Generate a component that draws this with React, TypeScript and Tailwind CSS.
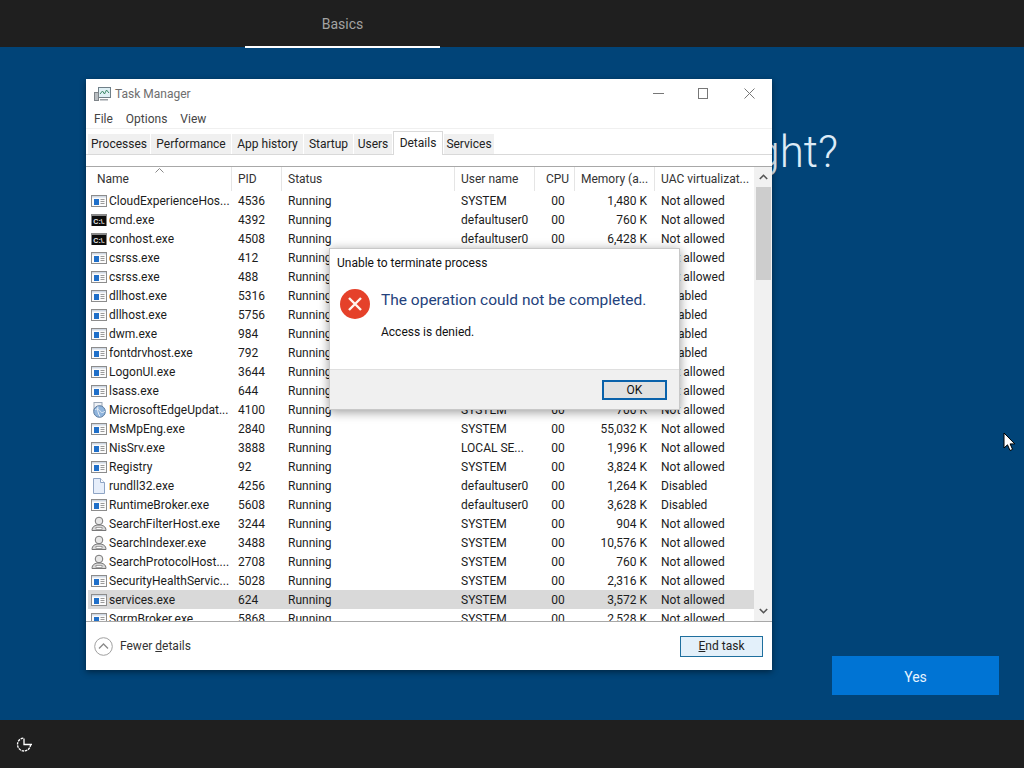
import React from 'react';

type IconKind = 'app' | 'cmd' | 'file' | 'user' | 'edge';

interface Proc {
  name: string;
  pid: string;
  user: string;
  mem: string;
  uac: string;
  icon: IconKind;
}

const procs: Proc[] = [
  { name: 'CloudExperienceHos...', pid: '4536', user: 'SYSTEM', mem: '1,480 K', uac: 'Not allowed', icon: 'app' },
  { name: 'cmd.exe', pid: '4392', user: 'defaultuser0', mem: '760 K', uac: 'Not allowed', icon: 'cmd' },
  { name: 'conhost.exe', pid: '4508', user: 'defaultuser0', mem: '6,428 K', uac: 'Not allowed', icon: 'cmd' },
  { name: 'csrss.exe', pid: '412', user: 'SYSTEM', mem: '1,012 K', uac: 'Not allowed', icon: 'app' },
  { name: 'csrss.exe', pid: '488', user: 'SYSTEM', mem: '1,104 K', uac: 'Not allowed', icon: 'app' },
  { name: 'dllhost.exe', pid: '5316', user: 'defaultuser0', mem: '2,120 K', uac: 'Disabled', icon: 'app' },
  { name: 'dllhost.exe', pid: '5756', user: 'defaultuser0', mem: '1,860 K', uac: 'Disabled', icon: 'app' },
  { name: 'dwm.exe', pid: '984', user: 'DWM-1', mem: '22,340 K', uac: 'Disabled', icon: 'app' },
  { name: 'fontdrvhost.exe', pid: '792', user: 'UMFD-1', mem: '1,340 K', uac: 'Disabled', icon: 'app' },
  { name: 'LogonUI.exe', pid: '3644', user: 'SYSTEM', mem: '9,212 K', uac: 'Not allowed', icon: 'app' },
  { name: 'lsass.exe', pid: '644', user: 'SYSTEM', mem: '4,508 K', uac: 'Not allowed', icon: 'app' },
  { name: 'MicrosoftEdgeUpdat...', pid: '4100', user: 'SYSTEM', mem: '700 K', uac: 'Not allowed', icon: 'edge' },
  { name: 'MsMpEng.exe', pid: '2840', user: 'SYSTEM', mem: '55,032 K', uac: 'Not allowed', icon: 'app' },
  { name: 'NisSrv.exe', pid: '3888', user: 'LOCAL SE...', mem: '1,996 K', uac: 'Not allowed', icon: 'app' },
  { name: 'Registry', pid: '92', user: 'SYSTEM', mem: '3,824 K', uac: 'Not allowed', icon: 'app' },
  { name: 'rundll32.exe', pid: '4256', user: 'defaultuser0', mem: '1,264 K', uac: 'Disabled', icon: 'file' },
  { name: 'RuntimeBroker.exe', pid: '5608', user: 'defaultuser0', mem: '3,628 K', uac: 'Disabled', icon: 'app' },
  { name: 'SearchFilterHost.exe', pid: '3244', user: 'SYSTEM', mem: '904 K', uac: 'Not allowed', icon: 'user' },
  { name: 'SearchIndexer.exe', pid: '3488', user: 'SYSTEM', mem: '10,576 K', uac: 'Not allowed', icon: 'user' },
  { name: 'SearchProtocolHost....', pid: '2708', user: 'SYSTEM', mem: '760 K', uac: 'Not allowed', icon: 'user' },
  { name: 'SecurityHealthServic...', pid: '5028', user: 'SYSTEM', mem: '2,316 K', uac: 'Not allowed', icon: 'app' },
  { name: 'services.exe', pid: '624', user: 'SYSTEM', mem: '3,572 K', uac: 'Not allowed', icon: 'app' },
  { name: 'SgrmBroker.exe', pid: '5868', user: 'SYSTEM', mem: '2,528 K', uac: 'Not allowed', icon: 'app' },
];

const tabs = [
  { label: 'Processes', w: 'w-[62px]' },
  { label: 'Performance', w: 'w-[80px]' },
  { label: 'App history', w: 'w-[71px]' },
  { label: 'Startup', w: 'w-[49px]' },
  { label: 'Users', w: 'w-[38px]' },
];

function ProcIcon({ kind }: { kind: IconKind }) {
  if (kind === 'cmd') {
    return (
      <svg width="16" height="16" viewBox="0 0 16 16" className="shrink-0">
        <rect x="0.500" y="2" width="15" height="12" fill="#0c0c0c" />
        <rect x="0.500" y="2" width="15" height="2" fill="#8a8a8a" />
        <text x="8" y="12" textAnchor="middle" fontSize="7" fontWeight="700" fill="#e8e8e8" fontFamily="Liberation Sans, sans-serif">
          C:\.
        </text>
      </svg>
    );
  }
  if (kind === 'file') {
    return (
      <svg width="16" height="16" viewBox="0 0 16 16" className="shrink-0">
        <path d="M2.500 0.500h7l4 4v11h-11z" fill="#e6eefa" stroke="#8ea4c4" />
        <path d="M9.500 0.500v4h4" fill="#fff" stroke="#8ea4c4" />
      </svg>
    );
  }
  if (kind === 'user') {
    return (
      <svg width="16" height="16" viewBox="0 0 16 16" className="shrink-0">
        <circle cx="8" cy="5" r="3.800" fill="#e8e8e8" stroke="#777" />
        <path d="M1 14.500c0-4 3-5.500 7-5.500s7 1.500 7 5.500z" fill="#d8d8d8" stroke="#777" />
        <rect x="5" y="11.500" width="6" height="2" fill="#fff" stroke="#888" strokeWidth="0.700" />
      </svg>
    );
  }
  if (kind === 'edge') {
    return (
      <svg width="16" height="16" viewBox="0 0 16 16" className="shrink-0">
        <rect x="3" y="0.500" width="8" height="8" fill="#eef1f5" stroke="#9aa6b5" />
        <circle cx="8.500" cy="9.500" r="5.800" fill="#8fb4dc" stroke="#56779c" />
        <path d="M4 8c2-2 4-1 5 1s3 2 5 0M7 4.500c-1 3 0 7 2 10" stroke="#e8f0f8" fill="none" />
      </svg>
    );
  }
  return (
    <svg width="16" height="14" viewBox="0 0 16 14" className="shrink-0">
      <rect x="0.500" y="1.500" width="15" height="11" fill="#fbfbfb" stroke="#8c8c8c" />
      <rect x="1" y="2" width="14" height="1.500" fill="#cfd8e3" />
      <rect x="3" y="5" width="5" height="6" fill="#1f6fc9" />
      <path d="M9.500 5.500h4M9.500 7.500h4M9.500 9.500h4" stroke="#9a9a9a" />
    </svg>
  );
}

function ProcRow({ proc, selected }: { proc: Proc; selected: boolean }) {
  return (
    <div
      className={`grid grid-cols-[144px_50px_173px_80px_40px_80px_99px] h-[19px] items-center shrink-0 text-[12px] text-[#1c1c1c] ${
        selected ? 'bg-[#d9d9d9]' : ''
      }`}
    >
      <div className="flex items-center gap-[2px] pl-[3px] whitespace-nowrap overflow-hidden">
        <ProcIcon kind={proc.icon} />
        <span>{proc.name}</span>
      </div>
      <div className="pl-[6px]">{proc.pid}</div>
      <div className="pl-[6px]">Running</div>
      <div className="pl-[6px] whitespace-nowrap">{proc.user}</div>
      <div className="text-center pl-[6px]">00</div>
      <div className="text-right pr-[8px] whitespace-nowrap">{proc.mem}</div>
      <div className="pl-[6px] whitespace-nowrap">{proc.uac}</div>
    </div>
  );
}

function HeaderCell({ children, className = '' }: { children: React.ReactNode; className?: string }) {
  return <div className={`h-full flex items-center border-r border-[#e5e5e5] whitespace-nowrap ${className}`}>{children}</div>;
}

function TaskManager() {
  return (
    <div className="absolute left-[86px] top-[32px] w-[686px] h-[591px] bg-white flex flex-col shadow-[0_2px_6px_rgba(0,0,0,0.45)]">
      <div className="h-[29px] flex items-center pl-[8px] shrink-0">
        <svg width="17" height="16" viewBox="0 0 17 16" className="shrink-0">
          <rect x="4.500" y="1.500" width="12" height="10" fill="#dff0f5" stroke="#6f7f88" />
          <path d="M6 8l2.500-3 2 3 2-4 2.500 3" stroke="#3d8a6a" fill="none" />
          <rect x="0.500" y="6.500" width="4" height="8" fill="#b9bec2" stroke="#7e8489" />
          <rect x="6" y="13" width="8" height="1.500" fill="#9aa0a5" />
        </svg>
        <span className="ml-[4px] pt-[1px] text-[12px] text-[#6e6e6e]">Task Manager</span>
        <div className="ml-auto flex items-center pr-[17px] text-[#777]">
          <svg width="11" height="11" viewBox="0 0 11 11">
            <path d="M0 5.500h11" stroke="#777" />
          </svg>
          <svg width="10" height="11" viewBox="0 0 10 11" className="ml-[34px]">
            <rect x="0.500" y="0.500" width="9" height="10" fill="none" stroke="#777" />
          </svg>
          <svg width="11" height="11" viewBox="0 0 11 11" className="ml-[36px]">
            <path d="M0.500 0.500l10 10M10.500 0.500l-10 10" stroke="#777" />
          </svg>
        </div>
      </div>
      <div className="h-[21px] flex items-center gap-[13px] pl-[8px] pt-[1px] text-[12px] text-[#444] border-b border-[#f0f0f0] shrink-0">
        <span>File</span>
        <span>Options</span>
        <span>View</span>
      </div>
      <div className="h-[26px] flex items-end pl-[2px] gap-[1px] border-b border-[#d9d9d9] shrink-0">
        {tabs.map((t) => (
          <div
            key={t.label}
            className={`${t.w} h-[20px] bg-[#f0f0f0] flex items-center justify-center text-[12px] text-[#222] whitespace-nowrap`}
          >
            {t.label}
          </div>
        ))}
        <div className="w-[50px] h-[24px] mb-[-1px] bg-white border-x border-t border-[#d9d9d9] flex items-start pt-[2px] justify-center text-[12px] text-[#222]">
          Details
        </div>
        <div className="w-[50px] h-[20px] bg-[#f0f0f0] flex items-center justify-center text-[12px] text-[#222]">
          Services
        </div>
      </div>
      <div className="h-[12px] shrink-0 border-b border-[#a8a8a8]" />
      <div className="flex-1 min-h-0 flex border-b border-[#a8a8a8] overflow-hidden">
        <div className="flex-1 min-w-0 flex flex-col pl-[2px] overflow-hidden">
          <div className="relative grid grid-cols-[144px_50px_173px_80px_40px_80px_99px] h-[24px] shrink-0 text-[12px] text-[#333]">
            <span className="absolute left-[67px] top-[1px] text-[#777] leading-none">
              <svg width="9" height="5" viewBox="0 0 9 5">
                <path d="M0.500 4.500l4-4 4 4" fill="none" stroke="#888" />
              </svg>
            </span>
            <HeaderCell className="pl-[9px]">Name</HeaderCell>
            <HeaderCell className="pl-[6px]">PID</HeaderCell>
            <HeaderCell className="pl-[6px]">Status</HeaderCell>
            <HeaderCell className="pl-[6px]">User name</HeaderCell>
            <HeaderCell className="justify-center pl-[6px]">CPU</HeaderCell>
            <HeaderCell className="pl-[6px]">Memory (a...</HeaderCell>
            <div className="h-full flex items-center pl-[6px] whitespace-nowrap">UAC virtualizat...</div>
          </div>
          {procs.map((p, i) => (
            <ProcRow key={i} proc={p} selected={p.name === 'services.exe'} />
          ))}
        </div>
        <div className="w-[18px] shrink-0 bg-[#f1f1f1] flex flex-col items-center relative">
          <div className="h-[20px] flex items-center justify-center shrink-0">
            <svg width="9" height="6" viewBox="0 0 9 6">
              <path d="M0.800 5l3.700-3.700L8.200 5" fill="none" stroke="#555" strokeWidth="1.600" />
            </svg>
          </div>
          <div className="w-[15px] h-[93px] bg-[#cdcdcd]" />
          <div className="mt-auto h-[20px] flex items-center justify-center shrink-0">
            <svg width="9" height="6" viewBox="0 0 9 6">
              <path d="M0.800 1l3.700 3.700L8.200 1" fill="none" stroke="#555" strokeWidth="1.600" />
            </svg>
          </div>
        </div>
      </div>
      <div className="h-[48px] shrink-0 flex items-center pl-[8px] pr-[9px] text-[12px] text-[#333]">
        <svg width="19" height="19" viewBox="0 0 19 19" className="shrink-0">
          <circle cx="9.500" cy="9.500" r="8.800" fill="#fff" stroke="#a0a0a0" />
          <path d="M5 11.500l4.500-4.500 4.500 4.500" fill="none" stroke="#8a8a8a" strokeWidth="1.300" />
        </svg>
        <span className="ml-[7px]">
          Fewer <span className="underline">d</span>etails
        </span>
        <button className="ml-auto w-[83px] h-[21px] bg-[#e3f0fa] border border-[#1f6f9e] text-[12px] text-[#222]">
          <span className="underline">E</span>nd task
        </button>
      </div>
    </div>
  );
}

function ErrorDialog() {
  return (
    <div className="absolute left-[329px] top-[201px] w-[351px] h-[162px] bg-white flex flex-col shadow-[0_2px_10px_rgba(0,0,0,0.4)] border border-[#c8c8c8]">
      <div className="flex-1 min-h-0 flex flex-col pl-[7px]">
        <div className="pt-[5px] h-[28px] text-[12px] text-[#111]">Unable to terminate process</div>
        <div className="flex mt-[9px]">
          <svg width="32" height="32" viewBox="0 0 32 32" className="shrink-0 ml-[2px] mt-[2px]">
            <circle cx="16" cy="16" r="15" fill="#e5412a" />
            <path d="M10 10l12 12M22 10L10 22" stroke="#fff5ee" strokeWidth="2.400" />
          </svg>
          <div className="ml-[10px] pt-[3px]">
            <div className="text-[15.5px] leading-[22px] text-[#24427c] whitespace-nowrap">The operation could not be completed.</div>
            <div className="mt-[12px] text-[12px] text-[#111]">Access is denied.</div>
          </div>
        </div>
      </div>
      <div className="h-[40px] shrink-0 bg-[#f0f0f0] border-t border-[#dfdfdf] flex items-center justify-end pr-[12px]">
        <button className="w-[65px] h-[20px] bg-[#e1e1e1] border-2 border-[#0a62ab] text-[12px] text-[#111] leading-none">OK</button>
      </div>
    </div>
  );
}

export default function App() {
  return (
    <div className="w-[1024px] h-[768px] flex flex-col overflow-hidden bg-[#014478] font-['Roboto','Liberation_Sans',sans-serif]">
      <div className="h-[47px] shrink-0 bg-[#1f1f1f] relative z-10">
        <div className="ml-[245px] w-[195px] h-[48px] pt-[3px] border-b-2 border-white flex items-center justify-center text-[14px] text-[#a3a3a3]">
          Basics
        </div>
      </div>
      <main className="flex-1 min-h-0 relative">
        <div className="absolute right-[186px] top-[75px] text-[44px] leading-[60px] font-light text-[#dcebf7] whitespace-nowrap">
          Is this right?
        </div>
        <TaskManager />
        <ErrorDialog />
        <button className="absolute left-[832px] top-[609px] w-[167px] h-[39px] pt-[3px] bg-[#0074d4] text-[14px] text-[#e6f3ff]">Yes</button>
        <svg width="14" height="20" viewBox="0 0 14 20" className="absolute left-[1003px] top-[385px]">
          <path d="M1 1v15l3.500-3.200 2.500 5.700 2.600-1.100-2.500-5.500h4.700z" fill="#fff" stroke="#000" />
        </svg>
      </main>
      <div className="h-[48px] shrink-0 bg-[#1f1f1f] flex items-center pl-[16px]">
        <svg width="17" height="17" viewBox="0 0 17 17">
          <path d="M14.500 8.500a6.500 6.500 0 1 1-6.500-6.500" fill="none" stroke="#fff" strokeWidth="1.300" strokeDasharray="2.500 0.800" />
          <path d="M8 2.500v6h8" fill="none" stroke="#fff" strokeWidth="1.300" />
        </svg>
      </div>
    </div>
  );
}
